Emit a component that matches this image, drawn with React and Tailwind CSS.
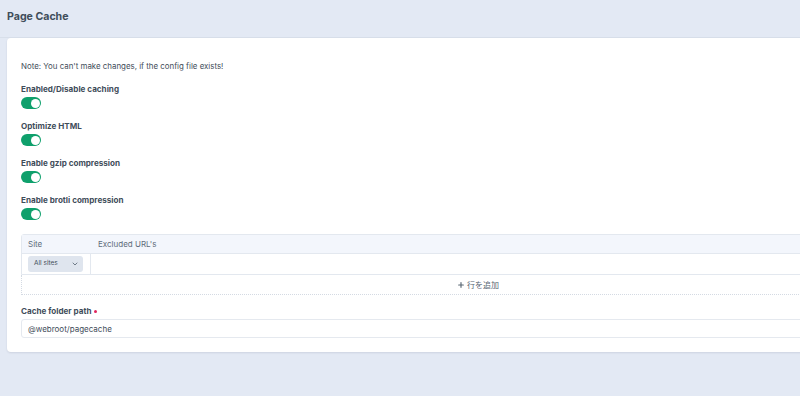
import { ChevronDown, Plus } from "lucide-react";

function Toggle() {
  return (
    <div className="w-[20px] h-[12px] rounded-full bg-[#0fa06c] flex items-center justify-end pr-[1.5px]">
      <div className="w-[9px] h-[9px] rounded-full bg-white" />
    </div>
  );
}

function Field({ label }) {
  return (
    <div className="flex flex-col gap-[2px]">
      <div className="text-[8.1px] leading-[12px] font-bold text-[#3f4d5a]">{label}</div>
      <Toggle />
    </div>
  );
}

export default function App() {
  const fields = [
    "Enabled/Disable caching",
    "Optimize HTML",
    "Enable gzip compression",
    "Enable brotli compression",
  ];

  return (
    <div
      className="w-[800px] h-[396px] overflow-hidden bg-[#e3e9f4]"
      style={{ fontFamily: "Inter, 'Noto Sans', 'Noto Sans CJK JP', sans-serif" }}
    >
      {/* Header */}
      <div className="h-[38px] pl-[7px] pt-[10px] border-b border-[#d8dfea]">
        <h1 className="text-[10.6px] leading-[14px] font-bold text-[#3f4d5a]">Page Cache</h1>
      </div>

      {/* Card */}
      <div className="ml-[7px] w-[942px] bg-white rounded-[4px] shadow-[0_1px_2px_rgba(50,60,80,0.12)] pt-[23px] pb-[14px] px-[14px]">
        <p className="text-[7.9px] leading-[10px] text-[#3f4d5a]">
          Note: You can't make changes, if the config file exists!
        </p>

        <div className="mt-[12px] flex flex-col gap-[11px]">
          {fields.map((f) => (
            <Field key={f} label={f} />
          ))}
        </div>

        {/* Table */}
        <div className="mt-[14px]">
          <div className="border border-[#e3e8ef] rounded-t-[3px]">
            <div className="h-[19px] bg-[#f3f6fc] border-b border-[#e3e8ef] flex items-center text-[8px] text-[#606d7b]">
              <div className="w-[69px] pl-[6px]">Site</div>
              <div className="pl-[7px]">Excluded URL's</div>
            </div>
            <div className="h-[20px] flex">
              <div className="w-[69px] border-r border-[#e3e8ef] flex items-center pl-[6px]">
                <div className="w-[55px] h-[16px] rounded-[3px] bg-[#dfe5ee] flex items-center justify-between pl-[6px] pr-[4px] text-[6.5px] text-[#3f4d5a]">
                  <span>All sites</span>
                  <ChevronDown size={8} strokeWidth={2.5} className="text-[#596673]" />
                </div>
              </div>
              <div className="flex-1" />
            </div>
          </div>
          <div className="h-[20px] border border-t-0 border-dotted border-[#d4dae3] flex items-center justify-center gap-[2px] text-[8px] text-[#596673]">
            <Plus size={8} strokeWidth={3.5} className="text-[#596673]" />
            <span>行を追加</span>
          </div>
        </div>

        {/* Cache folder path */}
        <div className="mt-[10px]">
          <div className="text-[8.1px] leading-[12px] font-bold text-[#3f4d5a] flex items-center gap-[3px]">
            Cache folder path
            <span className="w-[3px] h-[3px] rounded-full bg-[#e0245e] inline-block" />
          </div>
          <div className="mt-[2px] h-[19px] border border-[#e5e9ef] rounded-[3px] flex items-center pl-[6px] text-[8px] text-[#3f4d5a]">
            @webroot/pagecache
          </div>
        </div>
      </div>
    </div>
  );
}
